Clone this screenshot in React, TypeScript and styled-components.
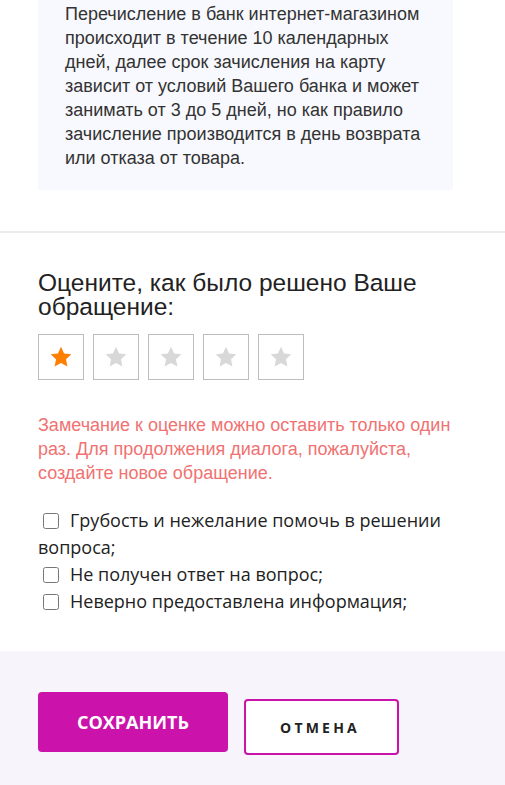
import React, { useState } from 'react';
import styled, { createGlobalStyle } from 'styled-components';

const GlobalStyle = createGlobalStyle`
  body {
    margin: 0;
    background: #ffffff;
    font-family: 'Liberation Sans', Arial, sans-serif;
  }
  * {
    box-sizing: border-box;
  }
`;

const reasons = [
  'Грубость и нежелание помочь в решении вопроса;',
  'Не получен ответ на вопрос;',
  'Неверно предоставлена информация;',
];

const Star: React.FC<{ active: boolean }> = ({ active }) => (
  <svg width="24" height="24" viewBox="0 0 24 24">
    <path
      d="M12 1.8l3.1 6.6 7.2.9-5.3 5 1.4 7.1L12 17.9l-6.4 3.5 1.4-7.1-5.3-5 7.2-.9z"
      fill={active ? '#ff7f00' : '#d8d8d8'}
    />
  </svg>
);

const App: React.FC = () => {
  const [rating, setRating] = useState(1);
  const [checked, setChecked] = useState<boolean[]>([false, false, false]);

  const onToggle = (i: number) => {
    setChecked(checked.map((c, idx) => (idx === i ? !c : c)));
  };

  return (
    <>
      <GlobalStyle />
      <InfoBox>
        Перечисление в банк интернет-магазином происходит в течение 10
        календарных дней, далее срок зачисления на карту зависит от условий
        Вашего банка и может занимать от 3 до 5 дней, но как правило зачисление
        производится в день возврата или отказа от товара.
      </InfoBox>
      <Divider />
      <RatingSection>
        <Title>Оцените, как было решено Ваше обращение:</Title>
        <StarRow>
          {[1, 2, 3, 4, 5].map((n) => (
            <StarButton key={n} onClick={() => setRating(n)}>
              <Star active={n <= rating} />
            </StarButton>
          ))}
        </StarRow>
        <Note>
          Замечание к оценке можно оставить только один раз. Для продолжения
          диалога, пожалуйста, создайте новое обращение.
        </Note>
        <ReasonList>
          {reasons.map((r, i) => (
            <Reason key={r}>
              <CheckBox
                type="checkbox"
                checked={checked[i]}
                onChange={() => onToggle(i)}
              />
              {r}
            </Reason>
          ))}
        </ReasonList>
      </RatingSection>
      <Footer>
        <SaveButton>СОХРАНИТЬ</SaveButton>
        <CancelButton>ОТМЕНА</CancelButton>
      </Footer>
    </>
  );
};

export default App;

const InfoBox = styled.div`
  width: 415px;
  margin-left: 38px;
  padding: 2px 20px 20px 27px;
  background: #f8f9fe;
  color: #333333;
  font-size: 18px;
  line-height: 24px;
`;

const Divider = styled.div`
  margin-top: 41px;
  height: 2px;
  background: #ececec;
`;

const RatingSection = styled.div`
  padding: 38px 38px 36px;
`;

const Title = styled.h2`
  margin: 0;
  width: 400px;
  font-size: 24.5px;
  font-weight: normal;
  line-height: 24px;
  color: #222222;
`;

const StarRow = styled.div`
  display: flex;
  gap: 9px;
  margin-top: 15px;
`;

const StarButton = styled.button`
  width: 46px;
  height: 46px;
  padding: 0;
  display: flex;
  align-items: center;
  justify-content: center;
  background: #ffffff;
  border: 1px solid #bdbdbd;
  cursor: pointer;
`;

const Note = styled.p`
  margin: 33px 0 0;
  font-size: 18px;
  line-height: 24px;
  color: #f07272;
  width: 415px;
`;

const ReasonList = styled.div`
  margin-top: 22px;
  width: 420px;
  font-family: 'Open Sans', 'Noto Sans', sans-serif;
  font-size: 18px;
  line-height: 27px;
  color: #222222;
`;

const Reason = styled.label`
  display: block;
`;

const CheckBox = styled.input`
  width: 16px;
  height: 16px;
  margin: 0 11px 0 5px;
  vertical-align: -2px;
`;

const Footer = styled.div`
  display: flex;
  align-items: flex-start;
  gap: 16px;
  min-height: 134px;
  padding: 41px 38px 0;
  background: #f7f5fb;
`;

const SaveButton = styled.button`
  width: 190px;
  height: 60px;
  border: none;
  border-radius: 4px;
  background: #cb12ab;
  color: #ffffff;
  font-family: 'Open Sans', 'Noto Sans', sans-serif;
  font-size: 18px;
  font-weight: 700;
  cursor: pointer;
`;

const CancelButton = styled.button`
  margin-top: 7px;
  width: 155px;
  height: 56px;
  border: 2px solid #cb12ab;
  border-radius: 4px;
  background: #ffffff;
  color: #222222;
  font-family: 'Open Sans', 'Noto Sans', sans-serif;
  font-size: 14px;
  font-weight: 700;
  letter-spacing: 3.2px;
  padding-left: 3px;
  cursor: pointer;
`;
